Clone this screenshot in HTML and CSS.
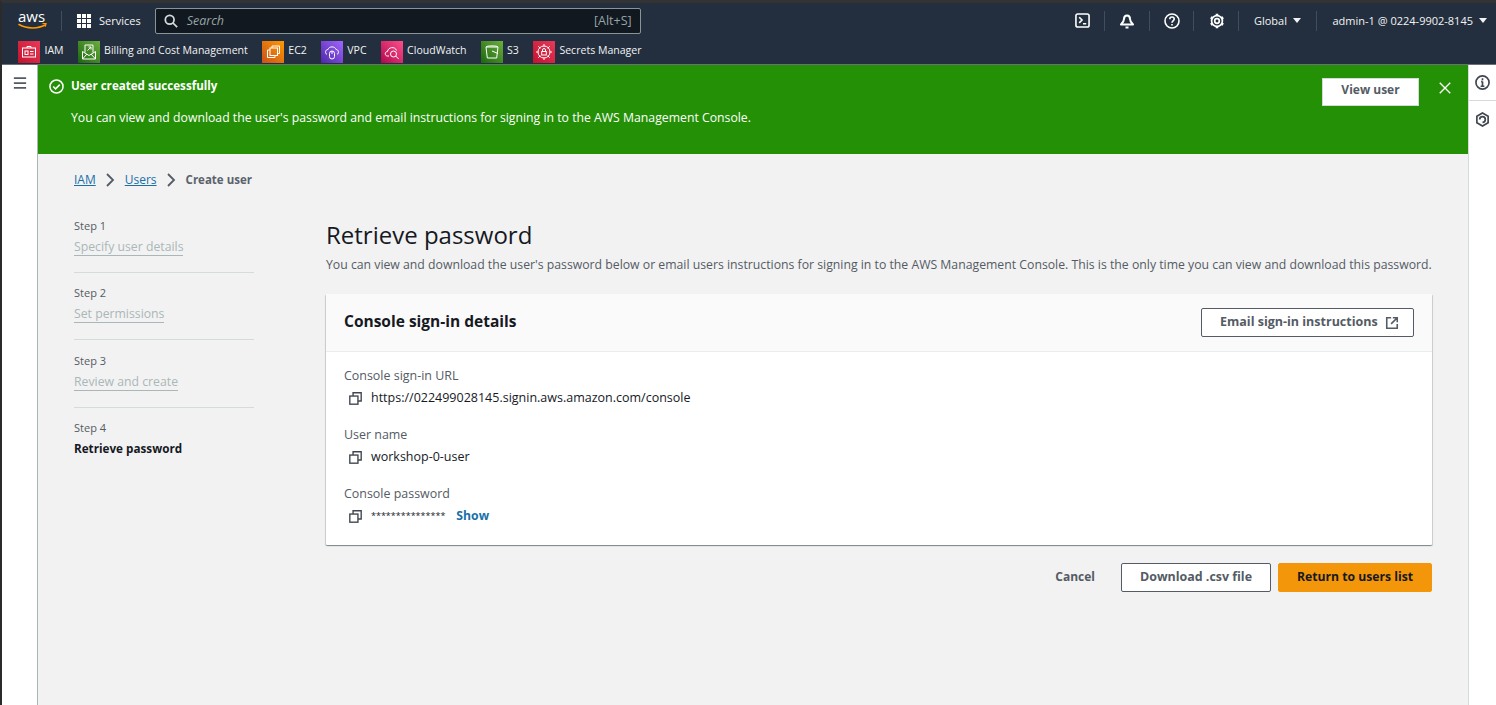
FILE: index.html
```html
<!DOCTYPE html>
<html lang="en-US">

<head>
  <title>Create user | IAM</title>
  <meta charset="utf-8">
  <link rel="stylesheet" href="styles.css">
</head>

<body>
  <header class="topnav">
    <div class="nav-row">
      <span class="aws-logo">
        <span class="aws-text">aws</span>
        <svg viewBox="0 0 30 8" width="30" height="8">
          <path d="M1 1.500c8 4.500 19 4.500 26 .5" fill="none" stroke="#f90" stroke-width="1.600" stroke-linecap="round"/>
          <path d="M24.500.6l3.600-.4-.9 3.400" fill="none" stroke="#f90" stroke-width="1.300"/>
        </svg>
      </span>
      <span class="nav-sep nav-sep-logo"></span>
      <svg class="grid-icon" viewBox="0 0 14 14" width="14" height="14">
        <path fill="#fff" d="M0 0h4v4H0zM5 0h4v4H5zM10 0h4v4h-4zM0 5h4v4H0zM5 5h4v4H5zM10 5h4v4h-4zM0 10h4v4H0zM5 10h4v4H5zM10 10h4v4h-4z"/>
      </svg>
      <span class="nav-label services">Services</span>
      <div class="search">
        <svg viewBox="0 0 16 16" width="14" height="14" fill="none" stroke="#d5dbdb" stroke-width="2">
          <circle cx="6.500" cy="6.500" r="5"/><path d="M10 10l5 5"/>
        </svg>
        <em class="search-text">Search</em>
        <span class="search-key">[Alt+S]</span>
      </div>
      <div class="nav-right">
        <svg class="nav-icon" viewBox="0 0 16 16" width="15" height="15" fill="none" stroke="#fff" stroke-width="1.700">
          <rect x="1" y="1" width="14" height="14" rx="2"/><path d="M4.500 4.500l3 3-3 3M8.500 11.500h3.500"/>
        </svg>
        <span class="nav-sep nav-sep-narrow"></span>
        <svg class="nav-icon" viewBox="0 0 16 16" width="16" height="16" fill="none" stroke="#fff" stroke-width="2">
          <path d="M8 2.500c-2 0-3 1.500-3 3.500 0 2.500-1.500 4-3 5.500h12c-1.500-1.500-3-3-3-5.500 0-2-1-3.500-3-3.500z" stroke-linejoin="round"/><path d="M6.500 14.500h3"/>
        </svg>
        <span class="nav-sep nav-sep-narrow"></span>
        <svg class="nav-icon" viewBox="0 0 16 16" width="16" height="16" fill="none" stroke="#fff" stroke-width="1.600">
          <circle cx="8" cy="8" r="7"/><path d="M5.800 6.200C5.800 4.900 6.800 4 8 4s2.200.9 2.200 2.100c0 1.800-2.200 1.800-2.200 3.600"/><path d="M8 11v1.500"/>
        </svg>
        <span class="nav-sep nav-sep-tight"></span>
        <svg class="nav-icon" viewBox="0 0 16 16" width="16" height="16" fill="none" stroke="#fff">
          <circle cx="8" cy="8" r="2.300" stroke-width="1.700"/>
          <circle cx="8" cy="8" r="5.400" stroke-width="1.700"/>
          <path stroke-width="2.600" d="M8 3V.8M12.300 5.500l1.900-1.100M12.300 10.500l1.900 1.100M8 13v2.200M3.700 10.500l-1.900 1.100M3.700 5.500L1.800 4.400"/>
        </svg>
        <span class="nav-sep nav-sep-tight"></span>
        <span class="nav-label">Global</span><span class="caret"></span>
        <span class="nav-sep nav-sep-last"></span>
        <span class="nav-label">admin-1 @ 0224-9902-8145</span><span class="caret"></span>
      </div>
    </div>
    <div class="fav-row">
      <span class="fav"><span class="fav-icon red">
        <svg viewBox="0 0 18 18" width="18" height="18" fill="none" stroke="#fff" stroke-width="1"><rect x="2.500" y="5" width="13" height="9"/><rect x="5" y="8" width="3" height="3.500"/><path d="M10 8.500h3.500M10 11h3.500M7 5V3.500h4V5"/></svg>
      </span>IAM</span>
      <span class="fav"><span class="fav-icon green">
        <svg viewBox="0 0 18 18" width="18" height="18" fill="none" stroke="#fff" stroke-width="1"><path d="M2.500 8.500v7.500h13V8.500L9 12.500zM2.500 16L7 11M15.500 16L11 11M5 9.500V2h8v7.500"/><path d="M7.500 7.500L11 4M8.500 4H11v2.500"/></svg>
      </span>Billing and Cost Management</span>
      <span class="fav"><span class="fav-icon orange">
        <svg viewBox="0 0 18 18" width="18" height="18" fill="none" stroke="#fff" stroke-width="1"><rect x="6" y="5" width="7.500" height="7.500"/><path d="M8 5V3h7.500v7.500h-2M6 7H3.500v7.500H11V12.500"/></svg>
      </span>EC2</span>
      <span class="fav"><span class="fav-icon purple">
        <svg viewBox="0 0 18 18" width="18" height="18" fill="none" stroke="#fff" stroke-width="1"><path d="M4 11.500C1.500 10 2.500 6.500 5 6.500 6 3 12 3 13 6.500c2.500 0 3.500 3.500 1 5"/><rect x="6.500" y="8" width="5" height="8" rx="2.500"/><path d="M9 8v3"/></svg>
      </span>VPC</span>
      <span class="fav"><span class="fav-icon pink">
        <svg viewBox="0 0 18 18" width="18" height="18" fill="none" stroke="#fff" stroke-width="1"><path d="M6 13H4.500C1.500 13 1.500 8.500 4.500 8.500 5 4 12 3 13.500 7.500"/><circle cx="10.500" cy="11" r="3"/><path d="M12.700 13l3 3"/></svg>
      </span>CloudWatch</span>
      <span class="fav"><span class="fav-icon green">
        <svg viewBox="0 0 18 18" width="18" height="18" fill="none" stroke="#fff" stroke-width="1"><path d="M3 4h12l-1.300 11H4.300z"/><path d="M3 4c0-1.500 12-1.500 12 0M9 8l6 2.500"/></svg>
      </span>S3</span>
      <span class="fav"><span class="fav-icon crimson">
        <svg viewBox="0 0 18 18" width="18" height="18" fill="none" stroke="#fff" stroke-width="1"><circle cx="9" cy="9" r="6"/><rect x="6.700" y="8.500" width="4.600" height="3.500"/><path d="M7.500 8.500V7a1.500 1.500 0 0 1 3 0v1.500M9 1v2.500M9 14.500V17M1 9h2.500M14.500 9H17M3.300 3.300l2 2M12.700 12.700l2 2M14.700 3.300l-2 2M5.300 12.700l-2 2"/></svg>
      </span>Secrets Manager</span>
    </div>
  </header>

  <div class="app">
    <aside class="rail rail-left">
      <svg viewBox="0 0 16 16" width="14" height="14" stroke="#545b64" stroke-width="2"><path d="M1 2.500h14M1 8h14M1 13.500h14"/></svg>
    </aside>

    <div class="content">
      <div class="flash">
        <svg class="flash-check" viewBox="0 0 16 16" width="15" height="15" fill="none" stroke="#fff" stroke-width="1.600">
          <circle cx="8" cy="8" r="7"/><path d="M4.500 8l2.500 2.500 4.500-4.500"/>
        </svg>
        <div class="flash-body">
          <div class="flash-title">User created successfully</div>
          <div class="flash-text">You can view and download the user's password and email instructions for signing in to the AWS Management Console.</div>
        </div>
        <button class="btn flash-btn" type="button">View user</button>
        <svg class="flash-close" viewBox="0 0 16 16" width="14" height="14" stroke="#fff" stroke-width="1.600"><path d="M2 2l12 12M14 2L2 14"/></svg>
      </div>

      <div class="page">
        <nav class="crumbs">
          <a href="#">IAM</a>
          <svg viewBox="0 0 10 14" width="10" height="14" fill="none" stroke="#545b64" stroke-width="1.800"><path d="M2 1l6 6-6 6"/></svg>
          <a href="#">Users</a>
          <svg viewBox="0 0 10 14" width="10" height="14" fill="none" stroke="#545b64" stroke-width="1.800"><path d="M2 1l6 6-6 6"/></svg>
          <span class="crumb-current">Create user</span>
        </nav>

        <div class="wizard">
          <ul class="steps">
            <li class="step"><small>Step 1</small><a href="#">Specify user details</a></li>
            <li class="step"><small>Step 2</small><a href="#">Set permissions</a></li>
            <li class="step"><small>Step 3</small><a href="#">Review and create</a></li>
            <li class="step step-active"><small>Step 4</small><b>Retrieve password</b></li>
          </ul>

          <main class="wizard-main">
            <h1>Retrieve password</h1>
            <p class="lead">You can view and download the user's password below or email users instructions for signing in to the AWS Management Console. This is the only time you can view and download this password.</p>

            <section class="card">
              <div class="card-head">
                <h2>Console sign-in details</h2>
                <button class="btn btn-email" type="button"><span>Email sign-in instructions</span>
                  <svg viewBox="0 0 16 16" width="14" height="14" fill="none" stroke="#545b64" stroke-width="1.800"><path d="M7 2H2v12h12V9M9 2h5v5M14 2L7 9"/></svg>
                </button>
              </div>
              <div class="card-body">
                <div class="field">
                  <div class="field-label">Console sign-in URL</div>
                  <div class="field-value">
                    <svg class="copy" viewBox="0 0 16 16" width="13" height="13" fill="none" stroke="#414750" stroke-width="1.700"><rect x="1" y="5" width="10" height="10"/><path d="M5 5V1h10v10h-4"/></svg>
                    https://022499028145.signin.aws.amazon.com/console
                  </div>
                </div>
                <div class="field">
                  <div class="field-label">User name</div>
                  <div class="field-value">
                    <svg class="copy" viewBox="0 0 16 16" width="13" height="13" fill="none" stroke="#414750" stroke-width="1.700"><rect x="1" y="5" width="10" height="10"/><path d="M5 5V1h10v10h-4"/></svg>
                    workshop-0-user
                  </div>
                </div>
                <div class="field">
                  <div class="field-label">Console password</div>
                  <div class="field-value">
                    <svg class="copy" viewBox="0 0 16 16" width="13" height="13" fill="none" stroke="#414750" stroke-width="1.700"><rect x="1" y="5" width="10" height="10"/><path d="M5 5V1h10v10h-4"/></svg>
                    <span class="stars">***************</span>
                    <a class="show" href="#">Show</a>
                  </div>
                </div>
              </div>
            </section>

            <div class="actions">
              <span class="cancel">Cancel</span>
              <button class="btn btn-csv" type="button">Download .csv file</button>
              <button class="btn btn-primary" type="button">Return to users list</button>
            </div>
          </main>
        </div>
      </div>
    </div>

    <aside class="rail rail-right">
      <div class="rail-slot">
        <svg viewBox="0 0 16 16" width="15" height="15" fill="none" stroke="#414750" stroke-width="1.800"><circle cx="8" cy="8" r="7"/><path d="M8 7v5M6 12h4M6.500 7H8M8 3.500v2"/></svg>
      </div>
      <div class="rail-slot">
        <svg viewBox="0 0 16 16" width="15" height="15" fill="none" stroke="#414750" stroke-width="1.800"><path d="M8 1l6 3.500v7L8 15l-6-3.500v-7z"/><path d="M5 8a3 3 0 1 1 3 3"/></svg>
      </div>
    </aside>
  </div>
</body>

</html>
```

FILE: styles.css
```css
* {
  box-sizing: border-box;
}

html, body {
  height: 100%;
}

body {
  margin: 0;
  overflow: hidden;
  display: flex;
  flex-direction: column;
  border-top: 3px solid #333;
  border-left: 2px solid #2b2b2b;
  background-color: #f2f2f2;
  color: #16191f;
  font-family: "Open Sans", "Noto Sans", sans-serif;
  font-size: 12.25px;
}

a {
  color: #1a6fa8;
}

button {
  font-family: inherit;
}

/* top navigation */
.topnav {
  height: 62px;
  flex: none;
  background-color: #232f3e;
  border-bottom: 1px solid #687078;
  color: #f2f3f3;
}

.nav-row {
  height: 35px;
  display: flex;
  align-items: center;
  padding-left: 16px;
}

.aws-logo {
  width: 30px;
  flex: none;
  display: flex;
  flex-direction: column;
}

.aws-text {
  color: #fff;
  font-size: 15px;
  line-height: 13px;
}

.nav-sep {
  width: 1px;
  height: 20px;
  margin: 0 15px;
  background-color: #414d5c;
}

.nav-sep-logo {
  margin: 0 15px 0 13px;
}

.nav-sep-narrow {
  margin: 0 14px;
}

.nav-sep-tight {
  margin-left: 13px;
}

.nav-sep-last {
  margin-right: 15.5px;
}

.grid-icon {
  flex: none;
}

.nav-label {
  font-size: 11px;
  white-space: nowrap;
}

.services {
  margin-left: 8px;
}

.search {
  width: 486px;
  height: 26px;
  margin-left: 14px;
  padding: 0 8px;
  display: flex;
  align-items: center;
  gap: 9px;
  background-color: #11181f;
  border: 1px solid #879596;
  border-radius: 2px;
  color: #95a5a6;
  font-size: 12.5px;
}

.search-text {
  flex: 1;
}

.nav-right {
  margin-left: auto;
  padding-right: 9px;
  display: flex;
  align-items: center;
}

.caret {
  width: 0;
  height: 0;
  margin-left: 6px;
  border-left: 4px solid transparent;
  border-right: 4px solid transparent;
  border-top: 5px solid #f2f3f3;
}

.fav-row {
  height: 26px;
  display: flex;
  align-items: flex-start;
  gap: 14px;
  padding: 3px 0 0 16px;
  font-size: 10.55px;
}

.fav {
  display: flex;
  align-items: flex-start;
  gap: 4.5px;
  line-height: 18px;
  white-space: nowrap;
}

.fav-icon {
  width: 22px;
  height: 22px;
  display: flex;
  align-items: center;
  justify-content: center;
}

.red { background: linear-gradient(45deg, #c4122f, #e63a58); }
.green { background: linear-gradient(45deg, #1b660f, #6cae3e); }
.orange { background: linear-gradient(45deg, #c8511b, #f90); }
.purple { background: linear-gradient(45deg, #4d27a8, #a166ff); }
.pink { background: linear-gradient(45deg, #b0084d, #ff4f8b); }
.crimson { background: linear-gradient(45deg, #c4122f, #e63a58); }

/* page frame */
.app {
  flex: 1;
  min-height: 0;
  display: flex;
}

.rail {
  flex: none;
  background-color: #fff;
}

.rail-left {
  width: 36px;
  padding: 11px 0 0 11px;
  border-right: 1px solid #aab7b8;
}

.rail-right {
  width: 28px;
  border-left: 1px solid #d5dbdb;
}

.rail-slot {
  height: 36px;
  display: flex;
  align-items: center;
  justify-content: center;
  border-bottom: 1px solid #d5dbdb;
}

.rail-slot:last-child {
  border-bottom: none;
}

.content {
  flex: 1;
  min-width: 0;
}

/* flash message */
.flash {
  height: 89px;
  display: flex;
  align-items: flex-start;
  padding: 12px 16px 0 11px;
  background-color: #249006;
  color: #fff;
}

.flash-check {
  flex: none;
  margin-top: 2px;
}

.flash-body {
  flex: 1;
  margin-left: 7px;
}

.flash-title {
  font-size: 11.6px;
  font-weight: 700;
  line-height: 17px;
}

.flash-text {
  margin-top: 15px;
  line-height: 18px;
}

.btn {
  height: 29px;
  padding: 0 18px 3px;
  background-color: #fff;
  border: 1px solid #545b64;
  border-radius: 2px;
  color: #545b64;
  font-size: 12.4px;
  font-weight: 700;
  white-space: nowrap;
}

.flash-btn {
  width: 97px;
  height: 28px;
  margin: 1px 0 0 16px;
  padding-bottom: 6px;
  border-color: #d5dbdb;
  border-radius: 0;
  font-size: 12px;
}

.flash-close {
  flex: none;
  margin: 4px 0 0 19px;
}

/* page body */
.page {
  padding: 17px 36px 0;
}

.crumbs {
  height: 17px;
  display: flex;
  align-items: center;
  gap: 9.5px;
  font-size: 12px;
}

.crumb-current {
  color: #5a626c;
  font-size: 11.5px;
  font-weight: 700;
}

.wizard {
  display: flex;
  gap: 72px;
  margin-top: 29px;
}

.steps {
  width: 180px;
  flex: none;
  margin: 0;
  padding: 0;
  list-style: none;
}

.step {
  padding: 0 0 14px;
  margin-bottom: 11.33px;
  border-bottom: 1px solid #d5dbdb;
}

.step small {
  display: block;
  margin-bottom: 2px;
  color: #545b64;
  font-size: 11px;
  line-height: 17px;
}

.step a {
  color: #aab7b8;
  line-height: 22px;
  text-decoration: none;
  border-bottom: 1px solid #aab7b8;
}

.step b {
  display: block;
  font-size: 11.7px;
  line-height: 20px;
}

.step-active {
  border-bottom: none;
}

.wizard-main {
  flex: 1;
  min-width: 0;
  padding-top: 1px;
}

h1 {
  margin: 0 0 2px;
  font-size: 24px;
  font-weight: 400;
  line-height: 34px;
}

.lead {
  margin: 0 0 19px;
  color: #545b64;
  line-height: 21px;
  white-space: nowrap;
}

.card {
  background-color: #fff;
  border-radius: 1px;
  box-shadow: 0 1px 1px 0 rgba(0, 28, 36, 0.3), 1px 1px 1px 0 rgba(0, 28, 36, 0.15), -1px 1px 1px 0 rgba(0, 28, 36, 0.15);
}

.card-head {
  height: 58px;
  display: flex;
  align-items: center;
  justify-content: space-between;
  padding: 0 18px;
  background-color: #fafafa;
  border-bottom: 1px solid #eaeded;
}

h2 {
  margin: 0 0 4px;
  font-size: 15.5px;
  font-weight: 700;
}

.btn-email {
  width: 213px;
  padding: 0 14px 2px 18px;
  display: flex;
  align-items: center;
  gap: 7px;
  font-size: 12.5px;
}

.btn-email svg {
  flex: none;
  margin-top: 2px;
}

.card-body {
  padding: 15px 18px 19.5px;
  font-size: 12.45px;
}

.field {
  margin-bottom: 18.5px;
}

.field:last-child {
  margin-bottom: 0;
}

.field-label {
  color: #545b64;
  line-height: 18px;
}

.field-value {
  margin-top: 1.5px;
  padding-left: 5px;
  display: flex;
  align-items: center;
  gap: 9px;
  font-size: 12.5px;
  line-height: 21px;
}

.copy {
  flex: none;
  margin-top: 2px;
}

.stars {
  font-size: 9px;
}

.show {
  margin-left: 2px;
  font-size: 12.2px;
  font-weight: 700;
  text-decoration: none;
}

.actions {
  display: flex;
  align-items: center;
  justify-content: flex-end;
  gap: 7px;
  margin-top: 18px;
}

.cancel {
  margin: 0 19px 3px 0;
  color: #545b64;
  font-size: 12px;
  font-weight: 700;
}

.btn-csv {
  width: 150px;
  font-size: 12.45px;
}

.btn-primary {
  width: 154px;
  background-color: #f3960a;
  border-color: #f3960a;
  color: #16191f;
  font-size: 12.2px;
}
```
